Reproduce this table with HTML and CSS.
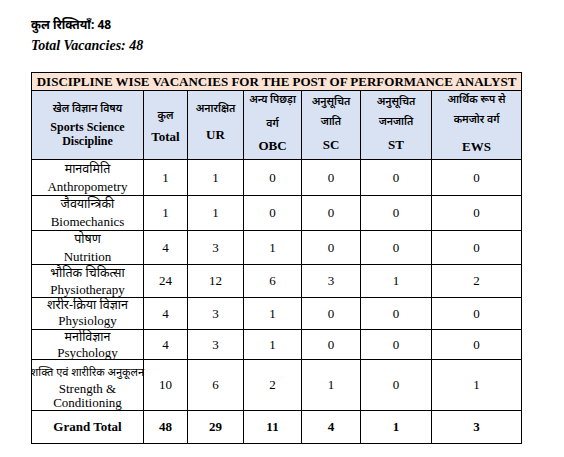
FILE: index.html
```html
<!DOCTYPE html>
<html>
<head>
<meta charset="utf-8">
<link rel="stylesheet" href="styles.css">
</head>
<body>
<div class="page">
  <p class="hi-total">कुल रिक्तियाँ: 48</p>
  <p class="en-total">Total Vacancies: 48</p>
  <table class="vac">
    <colgroup>
      <col class="c1"><col class="c2"><col class="c3"><col class="c4"><col class="c5"><col class="c6"><col class="c7">
    </colgroup>
    <tr class="title-row"><td colspan="7">DISCIPLINE WISE VACANCIES FOR THE POST OF PERFORMANCE ANALYST</td></tr>
    <tr class="head-row">
      <td><div class="hw hw1"><div class="hh">खेल विज्ञान विषय</div><div class="he he-small he-s">Sports Science</div><div class="he he-small">Discipline</div></div></td>
      <td><div class="hw hw2"><div class="hh">कुल</div><div class="he he-t">Total</div></div></td>
      <td><div class="hw hw3"><div class="hh">अनारक्षित</div><div class="he he-ur">UR</div></div></td>
      <td><div class="hw hw4"><div class="hh">अन्य पिछड़ा</div><div class="hh hh-m8">वर्ग</div><div class="he he-m5">OBC</div></div></td>
      <td><div class="hw hw5"><div class="hh">अनुसूचित</div><div class="hh hh-m4">जाति</div><div class="he he-m6">SC</div></div></td>
      <td><div class="hw hw5"><div class="hh">अनुसूचित</div><div class="hh hh-m4">जनजाति</div><div class="he he-m6">ST</div></div></td>
      <td><div class="hw hw4"><div class="hh">आर्थिक रूप से</div><div class="hh hh-m4">कमजोर वर्ग</div><div class="he he-m10">EWS</div></div></td>
    </tr>
    <tr class="r1"><td class="disc"><div class="dw"><div class="dh">मानवमिति</div><div class="de">Anthropometry</div></div></td><td>1</td><td>1</td><td>0</td><td>0</td><td>0</td><td>0</td></tr>
    <tr class="r2"><td class="disc"><div class="dw"><div class="dh">जैवयान्त्रिकी</div><div class="de">Biomechanics</div></div></td><td>1</td><td>1</td><td>0</td><td>0</td><td>0</td><td>0</td></tr>
    <tr class="r3"><td class="disc"><div class="dw"><div class="dh">पोषण</div><div class="de">Nutrition</div></div></td><td>4</td><td>3</td><td>1</td><td>0</td><td>0</td><td>0</td></tr>
    <tr class="r4"><td class="disc"><div class="dw"><div class="dh">भौतिक चिकित्सा</div><div class="de">Physiotherapy</div></div></td><td>24</td><td>12</td><td>6</td><td>3</td><td>1</td><td>2</td></tr>
    <tr class="r5"><td class="disc"><div class="dw"><div class="dh">शरीर-क्रिया विज्ञान</div><div class="de">Physiology</div></div></td><td>4</td><td>3</td><td>1</td><td>0</td><td>0</td><td>0</td></tr>
    <tr class="r6"><td class="disc"><div class="dw"><div class="dh">मनोविज्ञान</div><div class="de">Psychology</div></div></td><td>4</td><td>3</td><td>1</td><td>0</td><td>0</td><td>0</td></tr>
    <tr class="r7"><td class="disc"><div class="dw dw7"><div class="dh dh-small">शक्ति एवं शारीरिक अनुकूलन</div><div class="de de-tight de-first">Strength &amp;</div><div class="de de-tight">Conditioning</div></div></td><td>10</td><td>6</td><td>2</td><td>1</td><td>0</td><td>1</td></tr>
    <tr class="grand"><td>Grand Total</td><td>48</td><td>29</td><td>11</td><td>4</td><td>1</td><td>3</td></tr>
  </table>
</div>
</body>
</html>
```
FILE: styles.css
```css
html, body {
  margin: 0;
  padding: 0;
  background: #ffffff;
}
.page {
  padding: 16px 0 0 31px;
  color: #000;
}
.hi-total {
  margin: 0;
  font-family: "Noto Sans", "Noto Sans Devanagari", sans-serif;
  font-weight: bold;
  font-size: 12px;
  line-height: 18px;
}
.en-total {
  margin: 3px 0 0 0;
  font-family: "Liberation Serif", serif;
  font-weight: bold;
  font-style: italic;
  font-size: 14px;
  line-height: 18px;
}
.vac {
  margin-top: 17px;
  border-collapse: collapse;
  table-layout: fixed;
  width: 491px;
  font-family: "Liberation Serif", "Noto Sans Devanagari", serif;
  font-size: 13px;
}
.c1 { width: 112px; }
.c2 { width: 44px; }
.c3 { width: 56px; }
.c4 { width: 58px; }
.c5 { width: 59px; }
.c6 { width: 71px; }
.c7 { width: 90px; }
.vac td {
  border: 1px solid #000;
  text-align: center;
  vertical-align: middle;
  padding: 0;
  line-height: 16px;
}
.title-row td {
  background: #fbe4d5;
  font-weight: bold;
  font-size: 13px;
  height: 17px;
  line-height: 17px;
  white-space: nowrap;
}

/* header row */
.head-row td {
  background: #d9e2f3;
  font-weight: bold;
  height: 68px;
  vertical-align: top;
}
.hw { height: 68px; overflow: visible; }
.hw1 { padding-top: 9px; height: 59px; }
.hw2 { padding-top: 16px; height: 52px; }
.hw3 { padding-top: 9px; height: 59px; }
.hw4 { padding-top: 0; }
.hw5 { padding-top: 2px; height: 66px; }
.hh {
  font-family: "Noto Sans", "Noto Sans Devanagari", sans-serif;
  font-size: 10.5px;
  font-weight: 600;
  line-height: 16px;
  white-space: nowrap;
}
.he {
  font-family: "Liberation Serif", serif;
  font-size: 13px;
  font-weight: bold;
  line-height: 14px;
}
.he-small { font-size: 12px; }
.he-s { margin-top: 4px; }
.he-t { margin-top: 4px; line-height: 20px; }
.he-ur { margin-top: 9px; line-height: 20px; }
.hh-m8 { margin-top: 8px; }
.hh-m4 { margin-top: 4px; }
.he-m5 { margin-top: 8px; }
.he-m6 { margin-top: 9px; }
.he-m10 { margin-top: 13px; }

/* discipline cells */
.disc { vertical-align: top !important; }
.dw { overflow: visible; }
.dh {
  font-family: "Noto Sans", "Noto Sans Devanagari", sans-serif;
  font-size: 12.5px;
  line-height: 16px;
  white-space: nowrap;
}
.dh-small {
  font-size: 11px;
  margin-left: -2px;
  margin-right: -2px;
}
.de {
  font-family: "Liberation Serif", serif;
  font-size: 13px;
  line-height: 20px;
  white-space: nowrap;
}
.dw7 { padding-top: 4px; height: 46px; }
.de-tight { line-height: 14px; }
.de-first { margin-top: 2px; }

.r1 td { height: 35px; }
.r1 .dw { height: 34px; padding-top: 1px; }
.r2 td { height: 34px; }
.r2 .dw { height: 34px; }
.r3 td { height: 33px; }
.r3 .dw { height: 33px; }
.r4 td { height: 32px; }
.r4 .dw { height: 32px; }
.r4 .de { line-height: 18px; }
.r5 td { height: 31px; }
.r5 .dw { height: 31px; }
.r5 .dh, .r6 .dh { line-height: 14px; }
.r5 .de, .r6 .de { line-height: 18px; }
.r6 td { height: 29px; }
.r6 .dw { height: 29px; }
.r7 td { height: 50px; }
.grand td {
  height: 32px;
  font-weight: bold;
}
```
